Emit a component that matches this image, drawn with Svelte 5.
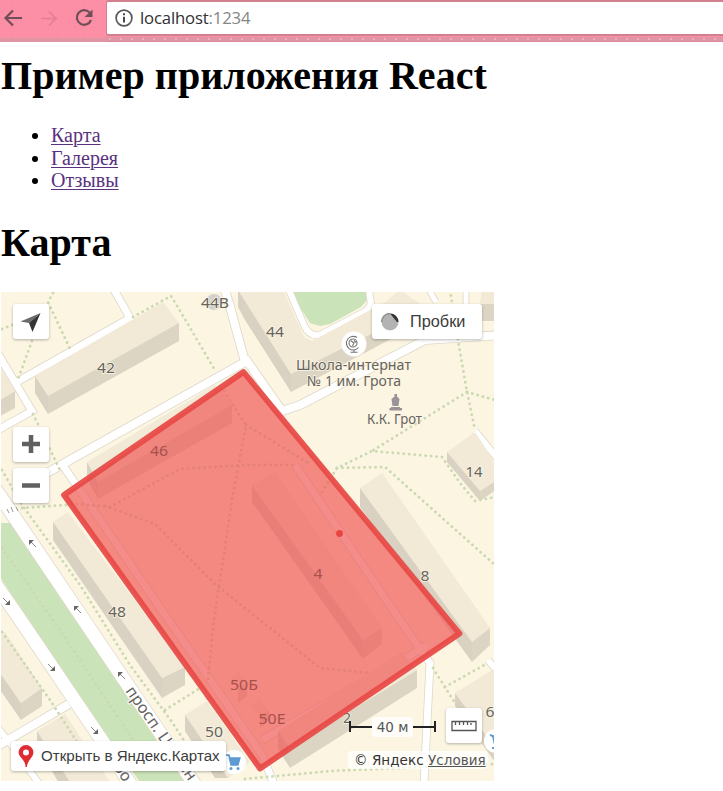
<script>
  const links = ['Карта', 'Галерея', 'Отзывы'];

  const greens = [
    '0,523 12,523 73,615 155,738 190,790 146,790 110,741 25,615 0,577',
    '289,290 310,323 320,326 330,324 361,307 367,300 366,290'
  ];

  // roads: path and width
  const roads = [
    ['M113,288 L130,318 L15,383', 7],
    ['M-2,354 L32,411 L-2,430', 7],
    ['M224,288 L229,303 L245,362 L20,488', 8],
    ['M245,358 L282,411 L300,405 L425,340 L500,335', 8],
    ['M64,467 L165,615 L200,665 L262,755 L274,784', 7],
    ['M295,465 L395,613 L430,663 L424,784', 7],
    ['M428,645 L262,740', 7],
    ['M288,288 L304,325 Q309,337 320,335 L364,312 Q373,307 370,298 L369,288', 6],
    ['M466,288 L466,336', 5],
    ['M428,288 L436,302', 5],
    ['M475,431 L497,458', 6],
    ['M-8,484 L75,607 L165,740 L195,785', 13],
    ['M-4,585 L17,615 L105,745 L133,788', 13],
    ['M69,704 L-2,746', 8],
    ['M-2,728 L12,746 L40,785', 6],
    ['M488,660 L498,672', 6]
  ];

  // buildings: roof, front wall, side wall
  const buildings = [
    ['35,376 163,302 179,323 48,396', '48,396 179,323 179,341 48,414', '35,376 48,396 48,414 35,393'],
    ['0,367 15,391 0,400', '15,391 15,408 0,416 0,400', ''],
    ['87,462 215,385 232,405 98,482', '98,482 232,405 232,423 98,499', '87,462 98,482 98,499 87,479'],
    ['53,522 68,512 185,667 162,678', '162,678 185,667 185,685 162,698', '53,522 162,678 162,698 53,540'],
    ['252,485 275,472 382,628 363,640', '363,640 382,628 382,644 363,659', '252,485 363,640 363,659 252,502'],
    ['360,488 382,473 490,628 472,642', '472,642 490,628 490,645 472,662', '360,488 472,642 472,662 360,507'],
    ['447,452 475,432 500,470 500,478 480,491', '480,491 500,478 500,487 480,501', '447,452 480,491 480,501 447,462'],
    ['238,290 283,290 304,337 312,341 385,302 400,290 425,307 291,374', '291,374 425,307 425,321 291,392', '238,290 291,374 291,392 245,320 238,307'],
    ['482,288 500,288 500,304 480,304', '480,304 500,304 500,321 480,321', ''],
    ['278,731 402,652 417,670 290,748', '290,748 417,670 417,688 290,768', '278,731 290,748 290,768 278,749'],
    ['185,715 207,701 250,762 228,778', '', '185,715 228,778 215,778 185,731'],
    ['-2,638 5,632 42,688 21,703 -2,670', '21,703 42,688 42,706 21,720', '-2,670 21,703 21,720 -2,687'],
    ['37,731 65,714 112,785 72,785', '', '37,731 72,785 60,785 37,745'],
    ['455,693 497,667 497,748', '', '455,693 497,750 497,765 455,706'],
    ['230,677 239,672 247,683 238,689', '238,689 247,683 247,696 238,703', ''],
    ['250,706 259,699 269,710 260,716', '260,716 269,710 269,720 260,728', '']
  ];

  const paths = [
    'M53,293 L48,302 L71,351', 'M2,329 L20,322', 'M32,341 L17,382', 'M133,317 L171,296 L176,304 L216,372',
    'M33,414 L60,470', 'M22,508 L80,504 L110,507 L180,469 L245,465 L295,465',
    'M105,506 L155,524 L215,584 L320,668 L370,673', 'M224,391 L246,425 L232,500 L214,620 L208,680',
    'M165,710 L205,685', 'M246,425 L310,464', 'M322,492 L337,468 L372,451 L442,457 L460,483 L475,501 L495,497',
    'M337,468 L385,467 L495,565', 'M450,290 L458,340 L467,392 L475,430', 'M467,392 L495,400',
    'M467,392 L372,451', 'M2,470 L20,502 L80,585 L130,665 L172,722 L200,765', 'M2,548 L60,630 L150,765',
    'M433,668 L455,703 L480,740', 'M445,687 L486,664', 'M2,632 L50,700 L92,765', 'M245,779 L330,771 L495,764'
  ];

  const labels = [
    ['44В', 215, 308, 28], ['44', 275, 337, 18], ['42', 106, 372.5, 18], ['14', 474, 477, 17],
    ['8', 425, 581, 9], ['48', 117, 617, 18], ['50', 214, 737, 18], ['2', 347, 723, 8], ['6', 490, 717, 9]
  ];

  const zoneLabels = [['46', 159, 456, 18], ['4', 318, 579, 9], ['50Б', 244, 690, 28], ['50Е', 272, 724, 27]];

  const arrows = [[32, 543, 0], [77, 609, 0], [121, 675, 0], [7, 602, 180], [52, 668, 180], [95, 731, 180]];
</script>

<header class="toolbar">
  <nav class="nav">
    <svg width="106" height="42" viewBox="0 0 106 42" fill="none" stroke-width="2.2">
      <path d="M22 18H6M13 10.5L5.5 18L13 25.5" stroke="#705058" />
      <path d="M41 18.5H56M49 11.5L56 18.5L49 25.5" stroke="#e27f92" stroke-width="1.7" />
      <path d="M89.5 12.5A7.3 7.3 0 1 0 91 20" stroke="#705058" />
      <path d="M92.5 9.5V17H84.5Z" fill="#705058" stroke="none" />
    </svg>
  </nav>
  <div class="address">
    <svg width="18" height="18" viewBox="0 0 18 18"><circle cx="9" cy="9" r="7.9" fill="none" stroke="#575757" stroke-width="1.7" /><path d="M9 7.7V13.4M9 4.3V6.2" stroke="#4b4b4b" stroke-width="2" /></svg>
    <span class="url">localhost<span class="port">:1234</span></span>
  </div>
</header>

<main>
  <h1>Пример приложения React</h1>
  <ul>
    {#each links as link}
      <li><a href="#{link}">{link}</a></li>
    {/each}
  </ul>
  <h1 class="second">Карта</h1>

  <section class="map">
    <svg class="canvas" width="493" height="489" viewBox="1 292 493 489">
      <rect x="0" y="290" width="500" height="495" fill="#fbf5e2" />
      {#each greens as g}<polygon points={g} fill="#cbe3b9" />{/each}
      <g fill="none" stroke="#dfd8ca">{#each roads as [d, w]}<path {d} stroke-width={w + 1.6} />{/each}</g>
      <g fill="none" stroke="#fff">{#each roads as [d, w]}<path {d} stroke-width={w} />{/each}</g>
      {#each buildings as [roof, front, side]}
        <polygon points={roof} fill="#f2ead7" />
        <polygon points={front} fill="#dcd5c4" />
        <polygon points={side} fill="#d9d1c1" />
      {/each}
      <g fill="none" stroke="#cbd9b0" stroke-width="2.8" stroke-linecap="round" stroke-dasharray="0.1 5.4">
        {#each paths as d}<path {d} />{/each}
      </g>
      {#each arrows as [x, y, r]}
        <g transform="translate({x} {y}) rotate({r})"><path d="M4 4L-1 -1" stroke="#888" /><path d="M-3 2L-3 -3L2 -3Z" fill="#666" /></g>
      {/each}
      <path d="M7 509L9 513M11 507L13 512M16 507L18 511" stroke="#999" />
      <circle cx="214" cy="302" r="8" fill="#d3d1ce" />
      <g class="labels">
        {#each labels as [t, x, y, w]}
          <text {x} {y} textLength={w} lengthAdjust="spacingAndGlyphs">{t}</text>
        {/each}
        <g class="place">
          <text x="353.5" y="370" textLength="115" lengthAdjust="spacingAndGlyphs">Школа-интернат</text>
          <text x="354" y="386" textLength="94" lengthAdjust="spacingAndGlyphs">№ 1 им. Грота</text>
          <text x="394.5" y="424" textLength="55" lengthAdjust="spacingAndGlyphs">К.К. Грот</text>
        </g>
        <text class="street" transform="translate(125 691) rotate(55)" textLength="68">просп. Ц</text>
        <text class="street" transform="translate(113 767) rotate(55)">ро</text>
        <text class="street" transform="translate(178 766) rotate(55)">ян</text>
      </g>
      <circle cx="354" cy="344" r="12.5" fill="#fff" />
      <g fill="none" stroke="#757575" stroke-width="1.1">
        <circle cx="353" cy="343" r="4" /><path d="M350.5 340.5L354 343L352.5 346M354 340.5L356 342.5" />
        <path d="M357 337.5A6.8 6.8 0 1 0 358.5 347.5M354 349.5V352M350.5 352.3H357.5" />
      </g>
      <path d="M394.5 394H397V396.5L399.5 399L398.5 406H392.5L391.5 399L394.5 396.5ZM391 407H400V408H402V410.5H389.5V408H391Z" fill="#9a9498" />
      <circle cx="234" cy="762" r="12" fill="#fff" />
      <path d="M226 755H229L230 758H240L238 765H231L229 757" fill="#5f9ad2" stroke="#5f9ad2" stroke-width="1.3" />
      <circle cx="231" cy="768.5" r="1.5" fill="#5f9ad2" /><circle cx="238" cy="768.5" r="1.5" fill="#5f9ad2" />
      <circle cx="496" cy="741" r="12" fill="#fff" />
      <path d="M490 735L493 736L495 745M492 748H495" stroke="#5f9ad2" stroke-width="2" fill="none" />

      <polygon points="243.5,372 459.5,633.5 260,768.5 64,495" fill="#ef5b58" fill-opacity=".7" />
      <g class="labels zone">
        {#each zoneLabels as [t, x, y, w]}
          <text {x} {y} textLength={w} lengthAdjust="spacingAndGlyphs">{t}</text>
        {/each}
      </g>
      <polygon points="243.5,372 459.5,633.5 260,768.5 64,495" fill="none" stroke="#e84a47" stroke-opacity=".94" stroke-width="5.8" stroke-linejoin="round" />
      <circle cx="339.5" cy="533.5" r="3.4" fill="#e84440" />
    </svg>

    <button class="control locate" aria-label="Locate"><svg width="36" height="36" viewBox="0 0 36 36"><path d="M27.5 10L7.5 18.5L16 20Z" fill="#6b6b6b" /><path d="M27.5 10L16 20L19.5 29Z" fill="#353535" /></svg></button>
    <button class="control zoom-in" aria-label="Zoom in"><svg width="36" height="36" viewBox="0 0 36 36"><path d="M9 18H27M18 9V27" stroke="#606060" stroke-width="4.5" /></svg></button>
    <button class="control zoom-out" aria-label="Zoom out"><svg width="36" height="36" viewBox="0 0 36 36"><path d="M9 18.5H27" stroke="#606060" stroke-width="4.5" /></svg></button>
    <button class="control traffic">
      <svg width="20" height="18" viewBox="0 0 20 18"><circle cx="10" cy="9" r="8.5" fill="#b3b3b3" /><path d="M1.5 9A8.5 8.5 0 0 1 10 .5" fill="none" stroke="#8e8e8e" stroke-width="1.5" /><path d="M10 .5A8.5 8.5 0 0 1 18.5 9L17 9Z" fill="#333" /></svg>
      <span>Пробки</span>
    </button>
    <button class="control open">
      <svg width="16" height="24" viewBox="0 0 16 24"><path fill-rule="evenodd" d="M8 1A7.4 7.4 0 0 0 .6 8.4C.6 13.5 7 14.5 7.6 23H9C9.3 16 15.4 13.5 15.4 8.4A7.4 7.4 0 0 0 8 1ZM8 5.5A3 3 0 1 1 8 11.5A3 3 0 0 1 8 5.5Z" fill="#df2b32" /></svg>
      <span>Открыть в Яндекс.Картах</span>
    </button>
    <div class="scale"><i></i><span>40 м</span><i class="right"></i></div>
    <button class="control ruler" aria-label="Ruler"><svg width="36" height="36" viewBox="0 0 36 36"><path d="M6 14.5H30V23.5H6ZM9.5 15V18M13.5 15V18M17.5 15V18M21.5 15V18M25 16V18" fill="none" stroke="#555" stroke-width="1.3" /></svg></button>
    <div class="copyright"><span>© Яндекс</span> <a href="#terms">Условия</a></div>
  </section>
</main>

<style>
  :global(body) { background: #fff; overflow: hidden; }
  .toolbar { position: relative; display: flex; height: 42px; box-sizing: border-box; background: #fc8fa5; border-bottom: 1px solid #d8899a; }
  .toolbar::before { content: ''; position: absolute; inset: 37px 0 0 106px; background: radial-gradient(circle at 4px 2px, #eab4c0 0 .6px, transparent 1.2px) 0 0 / 11px 5px #df95a4; }
  .nav { width: 106px; flex: none; height: 42px; overflow: hidden; background: linear-gradient(transparent 37px, #df95a4 39px), radial-gradient(circle at 3px 3px, #f78a9f 0 .6px, transparent 1.2px) 0 0 / 9px 8px; }
  .nav svg { display: block; }
  .address { display: flex; align-items: center; gap: 7px; flex: 1; height: 36px; box-sizing: border-box; padding: 0 0 0 8px; background: #fff; border: 2px solid #d27f8f; border-right: 0; border-left-width: 1px; border-radius: 3px 0 0 3px; z-index: 1; }
  .url { font: 16.7px/30px 'Open Sans', sans-serif; color: #303030; letter-spacing: -.15px; }
  .port { color: #858585; }
  main { padding-left: 1px; font: 20px/22.5px 'Liberation Serif', serif; color: #000; }
  h1 { margin: 11px 0 0; font-size: 40px; line-height: 46px; letter-spacing: .03px; white-space: nowrap; }
  ul { margin: 25px 0 0; padding-left: 50px; }
  li a { color: #59317f; text-decoration-thickness: 1px; text-underline-offset: 2px; }
  .second { margin-top: 28px; }
  .map { position: relative; width: 493px; height: 489px; margin-top: 26px; overflow: hidden; }
  .canvas { display: block; }
  .labels { font: 15px 'Noto Sans', sans-serif; fill: #666360; text-anchor: middle; paint-order: stroke; stroke: #fbf5e2; stroke-width: 1.5px; }
  .zone { fill: #a8504e; stroke: none; }
  .place { font-size: 14px; }
  .street { font-size: 16px; text-anchor: start; stroke: #fff; stroke-width: 2px; }
  .control { position: absolute; display: flex; align-items: center; box-sizing: border-box; padding: 0; border: 0; border-radius: 3px; background: #fff; box-shadow: 0 1px 3px rgba(0, 0, 0, .28); color: #3c3c3c; font-family: 'Liberation Sans', sans-serif; white-space: nowrap; }
  .control svg { flex: none; }
  .locate, .zoom-in, .zoom-out, .ruler { width: 36px; height: 35px; }
  .locate { left: 12px; top: 12px; }
  .zoom-in { left: 12px; top: 135px; }
  .zoom-out { left: 12px; top: 176px; }
  .ruler { left: 445px; top: 416px; }
  .traffic { left: 371px; top: 12px; width: 110px; height: 35px; padding: 1px 0 0 8px; gap: 10px; font-size: 16.3px; }
  .open { left: 10px; top: 449px; width: 215px; height: 30px; padding-left: 7px; gap: 7px; font-size: 15.1px; }
  .scale { position: absolute; left: 348px; top: 425px; width: 87px; height: 20px; display: flex; align-items: center; color: #555; }
  .scale span { width: 41px; text-align: center; background: rgba(255, 255, 255, .8); border-radius: 4px; font: 13.5px/20px 'DejaVu Sans', sans-serif; }
  .scale i { width: 23px; height: 11px; box-sizing: border-box; border-left: 2px solid #222; background: linear-gradient(#222, #222) 0 5px / 100% 2px no-repeat; }
  .scale .right { border-left: 0; border-right: 2px solid #222; }
  .copyright { position: absolute; left: 347px; top: 459px; width: 140px; height: 18px; box-sizing: border-box; padding-left: 6px; background: rgba(255, 255, 255, .75); border-radius: 4px; font: 13.5px/18px 'DejaVu Sans', sans-serif; color: #333; white-space: nowrap; letter-spacing: .05px; }
  .copyright a { color: #555; }
</style>
